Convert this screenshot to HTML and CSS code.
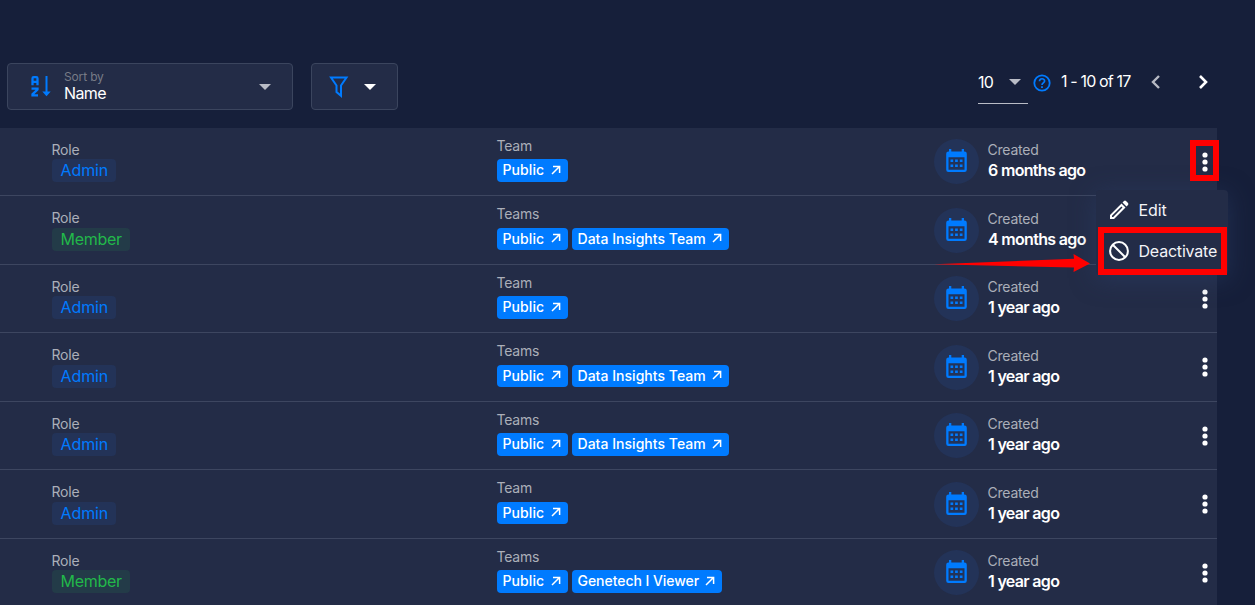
FILE: index.html
```html
<!DOCTYPE html>
<html lang="en">
<head>
<meta charset="utf-8">
<title>Users</title>
<link rel="stylesheet" href="styles.css">
</head>
<body>
<svg width="0" height="0" class="defs">
  <symbol id="calendar" viewBox="0 0 21 24"><path fill="currentColor" fill-rule="evenodd" d="M3 0h2.300v2.500h10.400V0H18v2.500h.5a2.300 2.300 0 0 1 2.300 2.300v16a2.300 2.300 0 0 1-2.300 2.300h-16a2.300 2.300 0 0 1-2.300-2.300v-16A2.300 2.300 0 0 1 2.500 2.500H3zM2.500 8.300v12.400h16V8.300zM4.500 10.500h2.700V13H4.500zm4.600 0h2.700V13H9.100zm4.700 0h2.700V13h-2.700zM4.500 15.500h2.700V18H4.500zm4.600 0h2.700V18H9.100zm4.700 0h2.700V18h-2.700z"/></symbol>
  <symbol id="dots" viewBox="0 0 6 20"><g fill="#fff"><circle cx="3" cy="3" r="2.600"/><circle cx="3" cy="10" r="2.600"/><circle cx="3" cy="17" r="2.600"/></g></symbol>
  <symbol id="out" viewBox="0 0 10 10"><path d="M1 9 8.500 1.500M2 1.400h6.600V8" fill="none" stroke="#fff" stroke-width="1.500"/></symbol>
</svg>
<main class="page">
  <header class="toolbar">
    <div class="box sort">
      <svg class="az" width="20" height="21" viewBox="0 0 20 21" fill="none" stroke="#007bff" stroke-width="2.300"><path d="M1.500 9.200V2.400Q1.500 1.200 2.700 1.200h2.600Q6.500 1.200 6.500 2.400V9.200M1.500 5.800h5M.5 12.700h6v.8L1.500 18.300v1.100H7"/><path d="M15.500 0v17" stroke-width="2"/><path d="M11.300 15.500h8.400l-4.200 4.700z" fill="#007bff" stroke="none"/></svg>
      <div class="sort-text"><span class="sort-label">Sort by</span><span class="sort-value">Name</span></div>
      <i class="caret dim"></i>
    </div>
    <div class="box filter">
      <svg width="20" height="22" viewBox="0 0 20 22" fill="none" stroke="#007bff" stroke-width="2"><path d="M2 1.500h15.500L12 9.500v10.300L7.500 16V9.500z"/></svg>
      <i class="caret"></i>
    </div>
    <div class="pager">
      <div class="size"><span>10</span><i class="caret dim"></i></div>
      <svg class="help" width="18" height="18" viewBox="0 0 18 18" fill="none" stroke="#007bff"><circle cx="9" cy="9" r="7.700" stroke-width="1.800"/><path d="M6.500 7.300C6.500 3.900 11.600 4 11.600 7c0 1.900-2.600 2-2.600 4" stroke-width="1.700"/><path d="M9 12.200V14" stroke-width="1.800"/></svg>
      <span class="range">1 - 10 of 17</span>
      <svg class="prev" width="9" height="14" viewBox="0 0 9 14" fill="none" stroke="#b7bac4" stroke-width="2.400"><path d="M8 1 2 7l6 6"/></svg>
      <svg class="next" width="9" height="14" viewBox="0 0 9 14" fill="none" stroke="#fff" stroke-width="2.600"><path d="m1 1 6 6-6 6"/></svg>
    </div>
  </header>
  <section class="list" id="list"></section>

  <div class="menu">
    <div class="item"><svg width="20" height="20" viewBox="0 0 20 20"><path fill="#fff" fill-rule="evenodd" d="M1 19v-4L12.500 3.500l4 4L5 19zM13.500 2.500 15 1q1-.8 2 0l2 2q.8 1 0 2l-1.500 1.500zM3 15.800v1.200h1.200l9.300-9.400-1.100-1.200z"/></svg><span class="edit">Edit</span></div>
    <div class="item"><svg width="20" height="20" viewBox="0 0 20 20" fill="none" stroke="#fff" stroke-width="2"><circle cx="10" cy="10" r="8.900"/><path d="m4 4 12 12"/></svg><span class="deactivate">Deactivate</span></div>
  </div>
  <div class="mark mark-dots"></div>
  <div class="mark mark-item"></div>
  <svg class="arrow" width="156" height="20" viewBox="0 0 156 20"><path fill="#f00" d="M0 10.200 140 4.800 139.500 0 156 9.500 139.500 18l.5-4.500z"/></svg>
</main>
<script src="rows.js"></script>
</body>
</html>
```
FILE: styles.css
```css
* { box-sizing: border-box; }
body { margin: 0; background: #161f3a; color: #fff; font-family: Inter, sans-serif; overflow: hidden; }
.defs { position: absolute; }
.page { position: relative; width: 1255px; height: 605px; overflow: hidden; }
.page svg { display: block; flex: none; }

.toolbar { display: flex; align-items: flex-start; height: 127.500px; padding: 63px 0 0 7px; }
.box { display: flex; align-items: center; height: 47px; border: 1px solid #3b455e; border-radius: 4px; background: #232c47; }
.sort { width: 286px; padding: 0 21px 0 23px; }
.sort-text { display: flex; flex-direction: column; flex: 1; margin-left: 13px; padding-bottom: 2px; }
.sort-label { color: #777b86; font-size: 12px; line-height: 14px; letter-spacing: -.15px; }
.sort-value { font-size: 16px; line-height: 18px; letter-spacing: -.6px; }
.caret { width: 0; height: 0; border: 6px solid transparent; border-top-color: #fff; border-bottom: 0; }
.dim { border-top-color: #b9bcc6; }
.filter { width: 87px; margin-left: 18px; padding: 0 21px 0 17px; justify-content: space-between; }
.pager { display: flex; margin-left: 580px; font-size: 16px; line-height: 20px; }
.size { display: flex; align-items: center; justify-content: space-between; width: 50px; height: 41px; padding: 0 7px 2px 0; border-bottom: 1px solid #b9bcc6; letter-spacing: -.8px; }
.help { margin: 11px 0 0 5px; }
.range { width: 72px; margin: 8px 0 0 10px; white-space: nowrap; letter-spacing: -.85px; }
.prev { margin: 12px 0 0 18px; }
.next { margin: 12px 0 0 39px; }

.list { width: 1217px; background: #232c47; }
.row { display: grid; grid-template-columns: 445px 437px 255px 28px; height: 68.500px; padding-left: 52px; border-bottom: 1px solid #3d4660; }
.label { display: block; margin-left: -.5px; font-size: 14px; line-height: 18px; color: #abafb9; letter-spacing: -.2px; }
.role-cell { padding-top: 13px; }
.role { display: inline-block; height: 23px; margin-top: .5px; padding: 0 8.500px; border-radius: 4px; font-size: 16px; line-height: 23px; }
.admin { width: 64px; background: #233358; color: #007bff; letter-spacing: -.1px; }
.member { width: 78px; background: #233b48; color: #22b84a; letter-spacing: -.3px; }
.team-cell { padding-top: 9px; }
.chips { display: flex; gap: 4px; margin-top: 4.500px; }
.chip { display: flex; justify-content: space-between; height: 22.500px; padding: 0 7px 0 5.500px; border-radius: 4px; background: #007bff; font-size: 14px; font-weight: 500; line-height: 22px; white-space: nowrap; }
.chip svg { margin-top: 5.500px; }
.public { width: 71px; letter-spacing: .1px; }
.insights { width: 157px; letter-spacing: .03px; }
.viewer { width: 150px; letter-spacing: -.05px; }
.date-cell { display: flex; }
.disc { display: grid; place-items: center; width: 45px; height: 45px; margin-top: 11.500px; padding: 0 1px 1px 0; border-radius: 50%; background: #233358; color: #007bff; }
.date { margin: 13.500px 0 0 9px; }
.ago { display: block; font-size: 16px; font-weight: 600; line-height: 22px; letter-spacing: -.68px; white-space: nowrap; }
.dots { margin: 24px 0 0 13px; }

.menu { position: absolute; left: 1096px; top: 190px; width: 132px; height: 85px; border-radius: 4px; background: #232c47; box-shadow: 0 4px 24px rgba(43, 63, 108, .5); }
.item { display: flex; align-items: center; gap: 10px; height: 41px; padding: 0 0 2px 12.500px; font-size: 16px; color: #f3f4f7; }
.edit { letter-spacing: -.1px; }
.deactivate { letter-spacing: -.2px; }
.mark { position: absolute; border: 6px solid #f00; }
.mark-dots { left: 1190px; top: 140px; width: 29px; height: 41px; }
.mark-item { left: 1098px; top: 227px; width: 129px; height: 48px; }
.arrow { position: absolute; left: 934px; top: 254px; }
```
FILE: rows.js
```js
const members = [
  ['Admin', ['Public'], '6 months ago'],
  ['Member', ['Public', 'Data Insights Team'], '4 months ago'],
  ['Admin', ['Public'], '1 year ago'],
  ['Admin', ['Public', 'Data Insights Team'], '1 year ago'],
  ['Admin', ['Public', 'Data Insights Team'], '1 year ago'],
  ['Admin', ['Public'], '1 year ago'],
  ['Member', ['Public', 'Genetech I Viewer'], '1 year ago'],
];
const chipClass = { 'Public': 'public', 'Data Insights Team': 'insights', 'Genetech I Viewer': 'viewer' };
document.getElementById('list').innerHTML = members.map(([role, teams, ago]) => `
  <article class="row">
    <div class="role-cell"><span class="label">Role</span><span class="role ${role.toLowerCase()}">${role}</span></div>
    <div class="team-cell"><span class="label">${teams.length > 1 ? 'Teams' : 'Team'}</span>
      <div class="chips">${teams.map(t => `<span class="chip ${chipClass[t]}">${t}<svg width="10" height="10"><use href="#out"/></svg></span>`).join('')}</div></div>
    <div class="date-cell"><div class="disc"><svg width="21" height="24"><use href="#calendar"/></svg></div>
      <div class="date"><span class="label">Created</span><span class="ago">${ago}</span></div></div>
    <svg class="dots" width="6" height="20"><use href="#dots"/></svg>
  </article>`).join('');
```
